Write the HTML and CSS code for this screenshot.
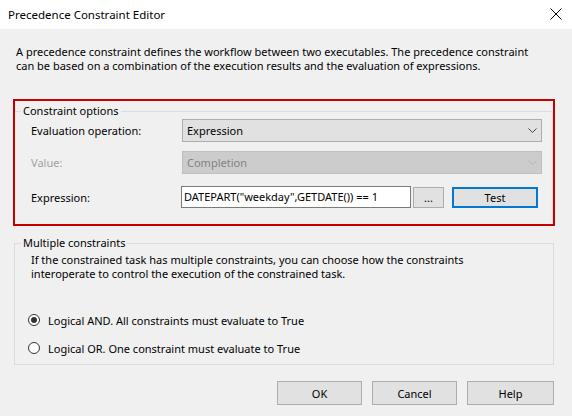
FILE: index.html
```html
<!DOCTYPE html>
<html>
<head>
<meta charset="utf-8">
<link rel="stylesheet" href="styles.css">
</head>
<body>
<div class="window">
  <div class="titlebar">
    <span class="title">Precedence Constraint Editor</span>
    <svg class="close" width="12" height="12" viewBox="0 0 12 12"><path d="M0.5 0.5L11.5 11.5M11.5 0.5L0.5 11.5" stroke="#000" stroke-width="1" fill="none"/></svg>
  </div>
  <div class="content">
    <p class="intro">A precedence constraint defines the workflow between two executables. The precedence constraint<br>can be based on a combination of the execution results and the evaluation of expressions.</p>

    <div class="group group-options">
      <div class="legend">Constraint options</div>
      <div class="row row-1">
        <span class="label">Evaluation operation:</span>
        <div class="combo">
          <span>Expression</span>
          <svg class="chev" width="9" height="5" viewBox="0 0 9 5"><path d="M0.5 0.5L4.5 4.5L8.5 0.5" stroke="#444" stroke-width="1" fill="none"/></svg>
        </div>
      </div>
      <div class="row row-2">
        <span class="label disabled">Value:</span>
        <div class="combo combo-disabled">
          <span>Completion</span>
          <svg class="chev" width="9" height="5" viewBox="0 0 9 5"><path d="M0.5 0.5L4.5 4.5L8.5 0.5" stroke="#b4b4b4" stroke-width="1" fill="none"/></svg>
        </div>
      </div>
      <div class="row row-3">
        <span class="label">Expression:</span>
        <div class="textbox">DATEPART("weekday",GETDATE()) == 1</div>
        <button class="btn btn-ellipsis">...</button>
        <button class="btn btn-test">Test</button>
      </div>
    </div>

    <div class="highlight"></div>

    <div class="group group-multi">
      <div class="legend">Multiple constraints</div>
      <p class="desc">If the constrained task has multiple constraints, you can choose how the constraints<br>interoperate to control the execution of the constrained task.</p>
      <div class="radio-row radio-first">
        <span class="radio checked"></span>
        <span>Logical AND. All constraints must evaluate to True</span>
      </div>
      <div class="radio-row radio-second">
        <span class="radio"></span>
        <span>Logical OR. One constraint must evaluate to True</span>
      </div>
    </div>

    <div class="buttons">
      <button class="btn btn-dialog btn-ok">OK</button>
      <button class="btn btn-dialog btn-cancel">Cancel</button>
      <button class="btn btn-dialog btn-help">Help</button>
    </div>
  </div>
</div>
</body>
</html>
```

FILE: styles.css
```css
* { box-sizing: border-box; }
html, body { margin: 0; padding: 0; }
body {
  font-family: "Noto Sans", "Open Sans", sans-serif;
  font-size: 11px;
  color: #000;
}
.window {
  width: 572px;
  height: 416px;
  display: flex;
  flex-direction: column;
  overflow: hidden;
}
.titlebar {
  height: 29px;
  background: #fff;
  display: flex;
  align-items: center;
  justify-content: space-between;
  padding: 0 10px 0 8px;
  flex: none;
}
.title { font-size: 11.5px; }
.close { margin-top: -2px; }
.content {
  flex: 1;
  background: #f0f0f0;
  position: relative;
}
.intro {
  margin: 16px 0 0 16px;
  line-height: 14px;
}
.group {
  border: 1px solid #dcdcdc;
  margin-left: 14px;
  width: 540px;
}
.legend {
  height: 16px;
  line-height: 16px;
  margin-top: -9px;
  margin-left: 6px;
  padding: 0 2px;
  background: #f0f0f0;
  width: fit-content;
}
.group-options {
  margin-top: 38px;
  width: 539px;
  padding-bottom: 16px;
}
.row {
  display: flex;
  align-items: center;
  padding-left: 16px;
}
.row-1 { height: 23px; }
.row-2 { height: 23px; margin-top: 9px; }
.row-3 { height: 22px; margin-top: 12px; align-items: flex-end; }
.row-3 .label { align-self: center; }
.label {
  width: 151px;
  flex: none;
}
.label.disabled { color: #a0a0a0; }
.combo {
  width: 360px;
  height: 23px;
  background: #e1e1e1;
  border: 1px solid #adadad;
  display: flex;
  align-items: center;
  justify-content: space-between;
  padding: 0 4px 0 4px;
}
.combo-disabled {
  background: #cccccc;
  border-color: #bfbfbf;
  color: #838383;
}
.textbox {
  width: 230px;
  height: 22px;
  margin-left: -1px;
  background: #fff;
  border: 1px solid #7a7a7a;
  padding: 0 2px;
  line-height: 20px;
  white-space: nowrap;
  overflow: hidden;
}
.btn {
  font-family: inherit;
  font-size: 11px;
  color: #000;
  background: #e1e1e1;
  border: 1px solid #adadad;
  padding: 0;
  margin: 0;
}
.btn-ellipsis {
  width: 31px;
  height: 21px;
  margin-left: 2px;
}
.btn-test {
  width: 86px;
  height: 21px;
  margin-left: 8px;
  border: 2px solid #0078d7;
}
.highlight {
  position: absolute;
  left: 13px;
  top: 70px;
  width: 542px;
  height: 127px;
  border: 2px solid #c40000;
  pointer-events: none;
}
.group-multi {
  margin-top: 18px;
  padding-bottom: 8px;
}
.desc {
  margin: 2px 0 0 16px;
  line-height: 14px;
}
.radio-row {
  display: flex;
  align-items: center;
  height: 16px;
  padding-left: 13px;
  gap: 8px;
}
.radio-first { margin-top: 31px; }
.radio-second { margin-top: 12px; }
.radio {
  width: 12px;
  height: 12px;
  border: 1px solid #333;
  border-radius: 50%;
  background: #fff;
  display: flex;
  align-items: center;
  justify-content: center;
  flex: none;
}
.radio.checked::after {
  content: "";
  width: 6px;
  height: 6px;
  border-radius: 50%;
  background: #333;
}
.buttons {
  display: flex;
  justify-content: flex-end;
  gap: 10px;
  margin-top: 16px;
  padding-right: 18px;
}
.btn-dialog {
  width: 85px;
  height: 24px;
}
.btn-help { width: 87px; }
```
